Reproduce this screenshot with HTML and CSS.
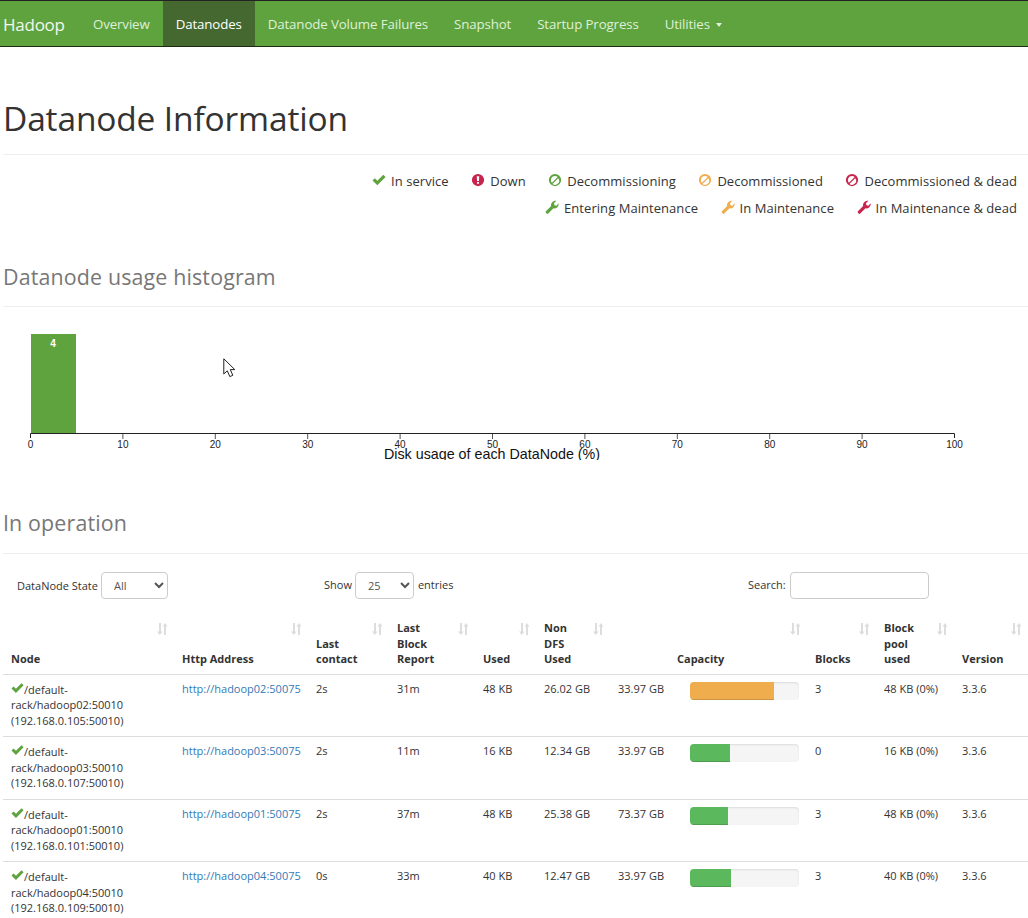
FILE: index.html
```html
<!DOCTYPE html>
<html lang="en">
<head>
<meta charset="utf-8">
<title>Datanode Information</title>
<link rel="stylesheet" href="styles.css">
</head>
<body>
<svg class="sprite" aria-hidden="true">
  <symbol id="i-check" viewBox="0 0 16 16"><path d="M.6 8.600 3.200 6 6.100 8.800 12.900 2 15.500 4.600 6.100 14Z"/></symbol>
  <symbol id="i-down" viewBox="0 0 16 16"><path fill-rule="evenodd" d="M8 1a7 7 0 1 1 0 14A7 7 0 0 1 8 1ZM6.600 3.600l.3 5.600h2.200l.3-5.600ZM6.900 10.200v2.200h2.200v-2.200Z"/></symbol>
  <symbol id="i-ban" viewBox="0 0 16 16"><path fill-rule="evenodd" d="M8 1a7 7 0 1 1 0 14A7 7 0 0 1 8 1ZM8 3.300a4.700 4.700 0 0 0-3.500 7.800l6.600-6.600A4.700 4.700 0 0 0 8 3.300ZM11.700 5.900l-6.600 6.600A4.700 4.700 0 0 0 11.700 5.900Z"/></symbol>
  <symbol id="i-wrench" viewBox="0 0 16 16"><path d="M.8 13 7 6.800C6.400 3.800 8.900.4 13 .9L10.300 3.600 10.800 6 13.100 6.500 15.600 3.800C16 7.800 12.800 10.100 9.700 9.500L3.400 15.800C2.700 16.500 0 13.800.8 13Z"/></symbol>
  <symbol id="i-sort" viewBox="0 0 12 14"><path d="M3 1v8.500H1l2.800 3.500 2.800-3.500H5V1ZM8 13V4.500H6.500L9 1l2.500 3.500H10V13Z"/></symbol>
</svg>

<nav class="navbar">
  <a class="brand" href="#">Hadoop</a>
  <a class="nav-link" href="#">Overview</a>
  <a class="nav-link active" href="#">Datanodes</a>
  <a class="nav-link" href="#">Datanode Volume Failures</a>
  <a class="nav-link" href="#">Snapshot</a>
  <a class="nav-link" href="#">Startup Progress</a>
  <a class="nav-link" href="#">Utilities <span class="caret"></span></a>
</nav>

<main class="page">
  <header class="page-header"><h1>Datanode Information</h1></header>

  <div class="legend">
    <ul class="legend-row">
      <li><svg class="ic green"><use href="#i-check"/></svg>In service</li>
      <li><svg class="ic red"><use href="#i-down"/></svg>Down</li>
      <li><svg class="ic green"><use href="#i-ban"/></svg>Decommissioning</li>
      <li><svg class="ic orange"><use href="#i-ban"/></svg>Decommissioned</li>
      <li><svg class="ic red"><use href="#i-ban"/></svg>Decommissioned &amp; dead</li>
    </ul>
    <ul class="legend-row">
      <li><svg class="ic green"><use href="#i-wrench"/></svg>Entering Maintenance</li>
      <li><svg class="ic orange"><use href="#i-wrench"/></svg>In Maintenance</li>
      <li><svg class="ic red"><use href="#i-wrench"/></svg>In Maintenance &amp; dead</li>
    </ul>
  </div>

  <h2 class="section-title first">Datanode usage histogram</h2>

  <svg class="histogram" viewBox="0 0 1025 153" role="img">
    <rect class="bar" x="28" y="27" width="45" height="99"/>
    <text class="bar-label" x="50" y="40">4</text>
    <path class="axis" d="M27.500 131V126.500H951.500V131"/>
    <path class="tick" d="M119.900 127v5M212.300 127v5M304.700 127v5M397.100 127v5M489.500 127v5M581.900 127v5M674.300 127v5M766.700 127v5M859.100 127v5"/>
    <g class="tick-labels">
      <text x="27.500" y="141">0</text><text x="119.900" y="141">10</text><text x="212.300" y="141">20</text>
      <text x="304.700" y="141">30</text><text x="397.100" y="141">40</text><text x="489.500" y="141">50</text>
      <text x="581.900" y="141">60</text><text x="674.300" y="141">70</text><text x="766.700" y="141">80</text>
      <text x="859.100" y="141">90</text><text x="951.500" y="141">100</text>
    </g>
    <text class="axis-title" x="489" y="152">Disk usage of each DataNode (%)</text>
  </svg>

  <svg class="cursor" viewBox="0 0 13 20" aria-hidden="true"><path d="M.8.8V16L4.300 12.800 6.800 18.600 9.800 17.300 7.300 11.600H11.800Z"/></svg>

  <h2 class="section-title second">In operation</h2>

  <div class="controls">
    <label class="state-filter">DataNode State
      <select class="select select-state"><option>All</option></select>
    </label>
    <label class="length-filter">Show
      <select class="select select-length"><option>25</option></select>
      <span class="entries">entries</span>
    </label>
    <label class="search-filter">Search:
      <input class="search" type="search">
    </label>
  </div>

  <table class="nodes">
    <colgroup>
      <col class="c-node"><col class="c-http"><col class="c-contact"><col class="c-report"><col class="c-used"><col class="c-nondfs"><col class="c-cap"><col class="c-bar"><col class="c-blocks"><col class="c-pool"><col class="c-version">
    </colgroup>
    <thead>
      <tr>
        <th>Node<svg class="sort"><use href="#i-sort"/></svg></th>
        <th>Http Address<svg class="sort"><use href="#i-sort"/></svg></th>
        <th>Last contact<svg class="sort"><use href="#i-sort"/></svg></th>
        <th>Last Block Report<svg class="sort"><use href="#i-sort"/></svg></th>
        <th>Used<svg class="sort"><use href="#i-sort"/></svg></th>
        <th>Non DFS Used<svg class="sort"><use href="#i-sort"/></svg></th>
        <th colspan="2" class="th-capacity">Capacity<svg class="sort"><use href="#i-sort"/></svg></th>
        <th>Blocks<svg class="sort"><use href="#i-sort"/></svg></th>
        <th>Block pool used<svg class="sort"><use href="#i-sort"/></svg></th>
        <th>Version<svg class="sort"><use href="#i-sort"/></svg></th>
      </tr>
    </thead>
    <tbody>
      <tr>
        <td><svg class="ic-node"><use href="#i-check"/></svg>/default-rack/hadoop02:50010 (192.168.0.105:50010)</td>
        <td><a href="#">http://hadoop02:50075</a></td><td>2s</td><td>31m</td><td>48 KB</td><td>26.02 GB</td><td>33.97 GB</td>
        <td class="td-bar"><div class="progress"><div class="fill warn" style="width:77%"></div></div></td>
        <td>3</td><td>48 KB (0%)</td><td>3.3.6</td>
      </tr>
      <tr>
        <td><svg class="ic-node"><use href="#i-check"/></svg>/default-rack/hadoop03:50010 (192.168.0.107:50010)</td>
        <td><a href="#">http://hadoop03:50075</a></td><td>2s</td><td>11m</td><td>16 KB</td><td>12.34 GB</td><td>33.97 GB</td>
        <td class="td-bar"><div class="progress"><div class="fill ok" style="width:37%"></div></div></td>
        <td>0</td><td>16 KB (0%)</td><td>3.3.6</td>
      </tr>
      <tr>
        <td><svg class="ic-node"><use href="#i-check"/></svg>/default-rack/hadoop01:50010 (192.168.0.101:50010)</td>
        <td><a href="#">http://hadoop01:50075</a></td><td>2s</td><td>37m</td><td>48 KB</td><td>25.38 GB</td><td>73.37 GB</td>
        <td class="td-bar"><div class="progress"><div class="fill ok" style="width:35%"></div></div></td>
        <td>3</td><td>48 KB (0%)</td><td>3.3.6</td>
      </tr>
      <tr>
        <td><svg class="ic-node"><use href="#i-check"/></svg>/default-rack/hadoop04:50010 (192.168.0.109:50010)</td>
        <td><a href="#">http://hadoop04:50075</a></td><td>0s</td><td>33m</td><td>40 KB</td><td>12.47 GB</td><td>33.97 GB</td>
        <td class="td-bar"><div class="progress"><div class="fill ok" style="width:38%"></div></div></td>
        <td>3</td><td>40 KB (0%)</td><td>3.3.6</td>
      </tr>
    </tbody>
  </table>
</main>
</body>
</html>
```
FILE: styles.css
```css
* { box-sizing: border-box; }
html, body { margin: 0; padding: 0; }
body {
  position: relative;
  height: 918px;
  overflow: hidden;
  background: #fff;
  color: #333;
  font-family: "Open Sans", "Noto Sans", sans-serif;
  font-size: 13px;
}
.sprite { display: none; }
a { text-decoration: none; }

.navbar {
  display: flex;
  height: 47px;
  background: #5fa33e;
  border-top: 1px solid #222;
  border-bottom: 1px solid #1d2b14;
}
.brand {
  width: 80px;
  padding-left: 3px;
  color: #f2f7ee;
  font-size: 17px;
  letter-spacing: -.25px;
  line-height: 47px;
}
.nav-link {
  padding: 0 13px;
  color: #dff0d8;
  font-size: 13.300px;
  letter-spacing: -.13px;
  line-height: 47px;
}
.nav-link.active { background: #44682f; color: #fff; }
.caret {
  display: inline-block;
  margin-left: 3px;
  vertical-align: middle;
  border-top: 4px solid;
  border-left: 3.500px solid transparent;
  border-right: 3.500px solid transparent;
}

.page { padding-left: 3px; }
.page-header { border-bottom: 1px solid #eee; height: 108px; }
.page-header h1 {
  margin: 0;
  padding-top: 46px;
  font-size: 33.500px;
  font-weight: 400;
  line-height: 50px;
  letter-spacing: -.15px;
}

.legend { padding: 13px 11px 0 0; }
.legend-row {
  display: flex;
  justify-content: flex-end;
  gap: 22.500px;
  margin: 0;
  padding: 0;
  list-style: none;
  height: 27px;
  line-height: 27px;
}
.legend-row li { display: flex; align-items: center; gap: 5px; letter-spacing: .05px; }
.ic { width: 14px; height: 14px; fill: currentColor; margin-bottom: 3px; }
.green { color: #5fa33e; }
.red { color: #c7254e; }
.orange { color: #f0ad4e; }

.section-title {
  margin: 0;
  padding: 0 0 14px;
  border-bottom: 1px solid #eee;
  color: #777;
  font-size: 21.400px;
  font-weight: 400;
  line-height: 30px;
  letter-spacing: .15px;
}
.section-title.first { margin-top: 40px; }
.section-title.second { margin-top: 48px; padding-bottom: 15px; }

.histogram { display: block; width: 1025px; height: 153px; font-family: "Liberation Sans", sans-serif; }
.bar { fill: #5fa33e; }
.bar-label { fill: #fff; font-size: 10px; font-weight: 700; text-anchor: middle; }
.axis { fill: none; stroke: #222; stroke-width: 1; }
.tick { fill: none; stroke: #555; stroke-width: 1; }
.tick-labels text { fill: #222; font-size: 10px; text-anchor: middle; }
.axis-title { fill: #111; font-size: 14.300px; text-anchor: middle; }

.cursor {
  position: absolute;
  left: 223px;
  top: 358px;
  width: 13px;
  height: 20px;
  fill: #fff;
  stroke: #222;
  stroke-width: 1;
}

.controls {
  display: grid;
  grid-template-columns: 321px 424px 1fr;
  height: 62px;
  padding-top: 18px;
  font-size: 11px;
}
.state-filter { padding-left: 14px; display: flex; align-items: flex-start; gap: 3px; line-height: 27px; }
.length-filter { display: flex; align-items: flex-start; gap: 3px; line-height: 25px; }
.entries { margin-left: 1px; }
.search-filter { display: flex; align-items: flex-start; gap: 4px; line-height: 25px; }
.select {
  height: 27px;
  background: #fff;
  border: 1px solid #ccc;
  border-radius: 4px;
  color: #555;
  font: inherit;
  padding-left: 8px;
}
.select-state { width: 67px; }
.select-length { width: 59px; }
.search {
  width: 139px;
  height: 27px;
  border: 1px solid #ccc;
  border-radius: 4px;
  background: #fff;
}

.nodes {
  width: 1025px;
  table-layout: fixed;
  border-collapse: collapse;
  font-size: 11px;
  line-height: 15.500px;
}
.c-node { width: 171px; }
.c-http { width: 134px; }
.c-contact { width: 81px; }
.c-report { width: 86px; }
.c-used { width: 61px; }
.c-nondfs { width: 74px; }
.c-cap { width: 70px; }
.c-bar { width: 127px; }
.c-blocks { width: 69px; }
.c-pool { width: 78px; }
.c-version { width: 74px; }
.nodes th {
  position: relative;
  height: 58px;
  padding: 0 30px 7px 8px;
  border-bottom: 1px solid #ddd;
  font-weight: 700;
  text-align: left;
  vertical-align: bottom;
}
.nodes th.th-capacity { padding-left: 67px; }
.nodes td {
  height: 62.500px;
  padding: 6px 8px 0;
  border-bottom: 1px solid #ddd;
  vertical-align: top;
}
.nodes a { color: #337ab7; }
.nodes .td-bar { padding: 7px 8px 0 10px; }
.sort {
  position: absolute;
  right: 6px;
  top: 6px;
  width: 12px;
  height: 14px;
  fill: #ddd;
}
.ic-node { width: 13px; height: 14px; fill: #5fa33e; vertical-align: -1px; }
.progress { height: 18px; background: #f5f5f5; border-radius: 4px; overflow: hidden; box-shadow: inset 0 1px 2px rgba(0,0,0,.1); }
.fill { height: 100%; box-shadow: inset 0 -1px 0 rgba(0,0,0,.15); }
.fill.warn { background: #f0ad4e; }
.fill.ok { background: #5cb85c; }
```
